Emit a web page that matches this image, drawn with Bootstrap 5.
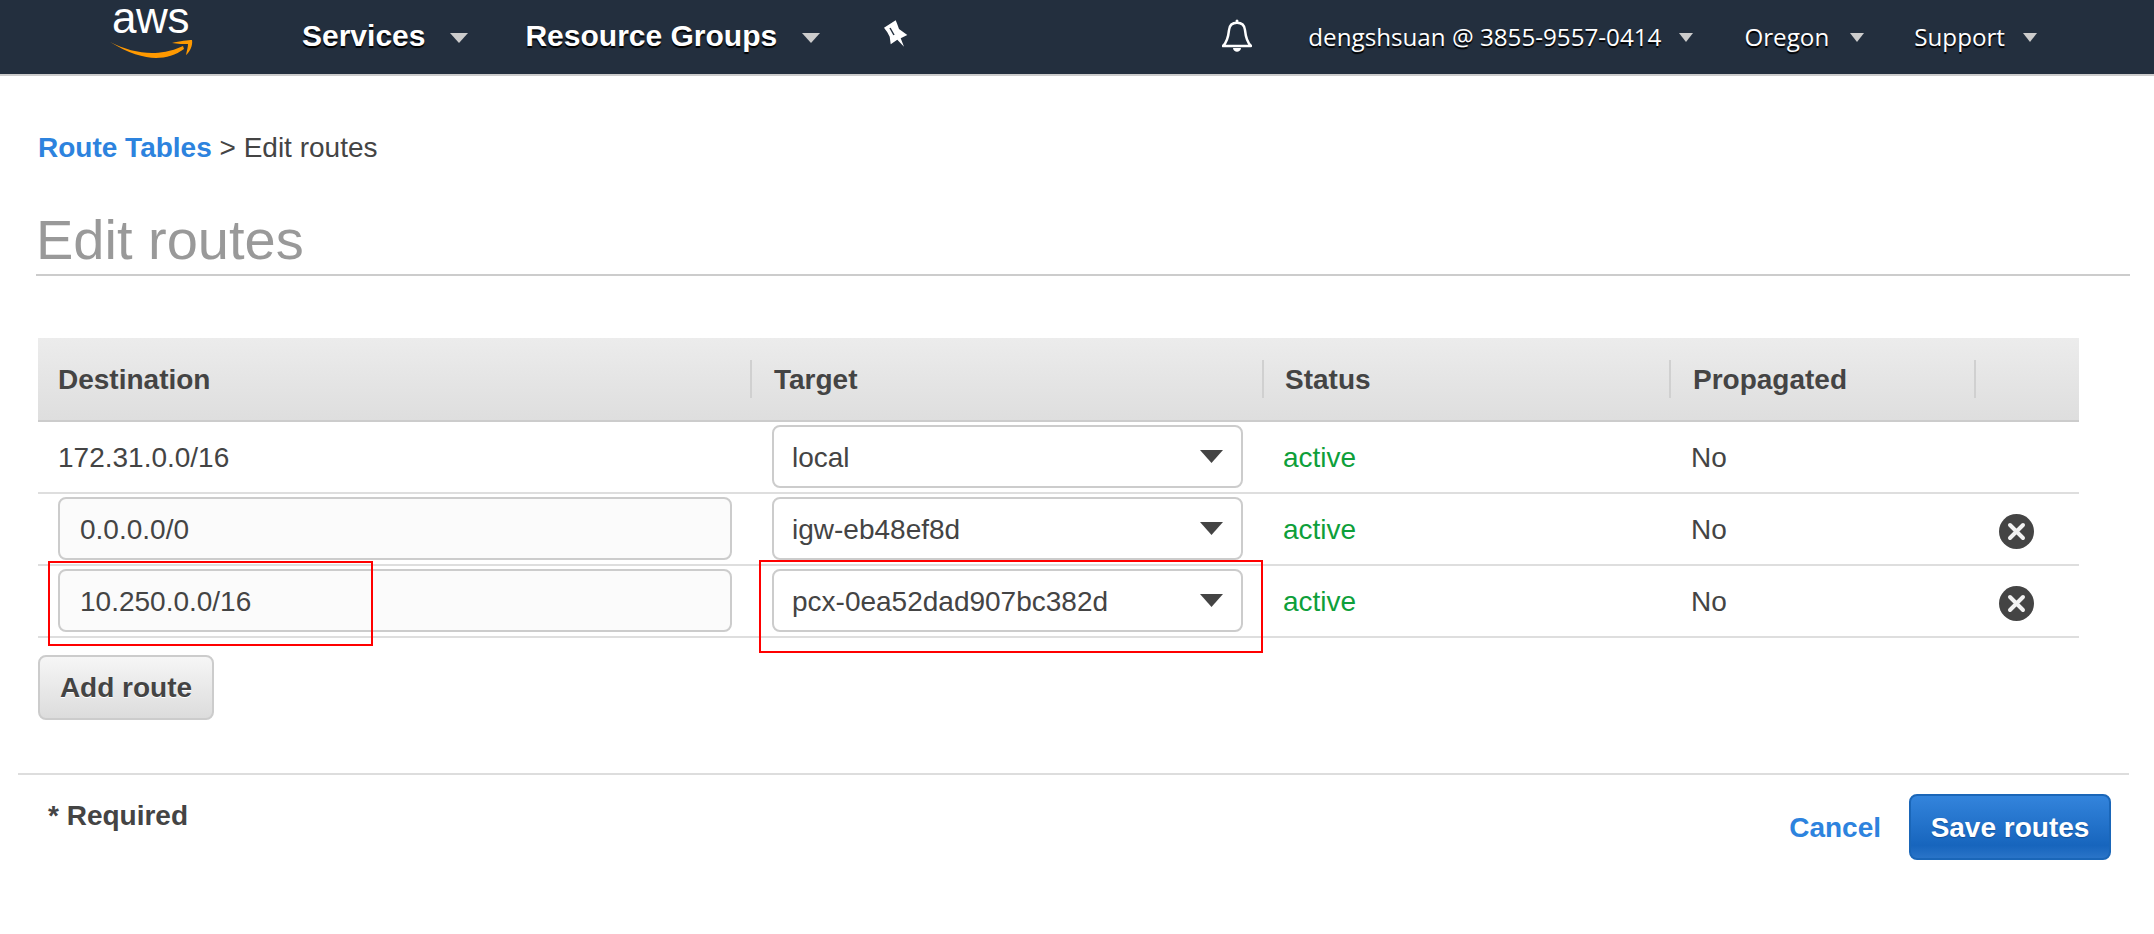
<!DOCTYPE html>
<html lang="en">
<head>
    <meta charset="UTF-8">
    <meta name="viewport" content="width=device-width, initial-scale=1.0">
    <title>Edit routes</title>
    <link rel="stylesheet" href="https://cdn.jsdelivr.net/npm/bootstrap@5.3.0/dist/css/bootstrap.min.css">

    <style>
        body { font-family: "Liberation Sans", Arial, sans-serif; font-size: 28px; color: #444; background: #fff; }

        /* Top bar */
        .aws-bar { height: 76px; background: #232f3e; border-bottom: 2px solid #ccc; padding: 0 117px 0 110px; }
        .aws-logo { width: 84px; align-self: flex-start; }
        .aws-word { display: block; padding-left: 2px; font-size: 44px; line-height: 36px; letter-spacing: -.4px; color: #fff; white-space: nowrap; }
        .aws-smile { display: block; width: 84px; height: 20px; margin-top: 4px; }
        .aws-bar .nav-link { padding: 0; color: #fff; white-space: nowrap; text-shadow: 0 2px 1px #000; }
        .aws-bar .main-link { font-weight: 700; font-size: 30px; line-height: 1; margin-top: -2px; }
        .aws-bar .user-link { font-family: "Open Sans", "Noto Sans", sans-serif; font-size: 24.2px; line-height: 1; }
        .aws-bar .dropdown-toggle::after { border-top: 10px solid #ccc; border-left: 9px solid transparent; border-right: 9px solid transparent; border-bottom: 0; margin-left: 25px; vertical-align: 3px; }
        .aws-bar .user-link.dropdown-toggle::after { border-top-width: 9px; border-left-width: 7px; border-right-width: 7px; margin-left: 18px; vertical-align: 4px; }
        .aws-bar .user-link.caret-wide::after { margin-left: 21px; }
        .gap-services { margin-left: 108px; }
        .gap-groups { margin-left: 57px; }
        .gap-pin { margin-left: 64px; }
        .pin-icon { display: block; width: 24px; height: 28px; margin-top: -6px; }
        .bell-icon { display: block; width: 30px; height: 34px; margin-top: -3px; }
        .gap-user { margin-left: 56px; }
        .gap-region { margin-left: 51px; }
        .gap-support { margin-left: 50px; }

        /* Page header */
        .crumbs { padding: 56px 0 0 38px; line-height: 32px; }
        .crumbs a { color: #2d83de; font-weight: 700; text-decoration: none; }
        .page-title { margin: 44px 24px 0 36px; padding: 0 0 2px 0; font-size: 56px; line-height: 64px; font-weight: 400; color: #999; border-bottom: 2px solid #ccc; }

        /* Routes table */
        .routes-wrap { margin: 62px 75px 0 38px; }
        .routes-table { table-layout: fixed; width: 2041px; margin: 0; border-collapse: separate; border-spacing: 0; color: #444; }
        .routes-table > :not(caption) > * > * { padding: 0; background: transparent; box-shadow: none; color: #444; }
        .routes-table thead th { height: 84px; vertical-align: middle; background: linear-gradient(#ececec, #dedede); border-bottom: 2px solid #ccc; font-weight: 700; position: relative; padding: 2px 0 0 20px; }
        .routes-table thead th.col-target, .routes-table thead th.col-prop { padding-left: 22px; }
        .routes-table thead th.col-status { padding-left: 21px; }
        .routes-table thead th:not(:last-child)::after { content: ""; position: absolute; right: -1px; top: 22px; height: 38px; width: 3px; background: #d0d0d0; border-right: 1px solid #fff; }
        .routes-table tbody td { height: 72px; padding: 3px 0 4px 0; vertical-align: top; line-height: 63px; border-bottom: 2px solid #dedede; position: relative; }
        .routes-table .col-dest { width: 714px; }
        .routes-table .col-target { width: 512px; }
        .routes-table .col-status { width: 407px; }
        .routes-table .col-prop { width: 305px; }
        .routes-table tbody td.cell-status { padding: 4px 0 3px 19px; color: #0e9f3a; }
        .routes-table tbody td.cell-dest { padding-left: 20px; padding-right: 20px; }
        .routes-table tbody td.cell-plain { padding-top: 4px; padding-bottom: 3px; }
        .routes-table tbody td.cell-target { padding-left: 20px; padding-right: 21px; }
        .routes-table tbody td.cell-prop { padding: 4px 0 3px 20px; }

        .route-input, .route-select { display: block; height: 63px; font-size: 28px; line-height: 1.2; color: #444; border: 2px solid #ccc; border-radius: 8px; box-shadow: none; }
        .route-input { background: #fbfbfb; padding: 2px 20px 0; }
        .route-select { padding: 2px 60px 0 18px; background-color: #fff; background-size: 23px 13px; background-position: right 18px center;
            background-image: url("data:image/svg+xml,%3Csvg xmlns='http://www.w3.org/2000/svg' viewBox='0 0 23 13'%3E%3Cpath fill='%23444' d='M0 0h23L11.5 13z'/%3E%3C/svg%3E"); }
        .remove-icon { display: block; width: 35px; height: 35px; margin: 17px 0 0 23px; }

        /* Red annotations over the screenshot */
        .mark-box { position: absolute; border: 2px solid #f00; pointer-events: none; }
        .mark-dest { left: 10px; top: -5px; width: 325px; height: 85px; }
        .mark-target { left: 7px; top: -6px; width: 504px; height: 93px; }

        .add-btn { display: block; margin-top: 17px; width: 176px; height: 65px; padding: 0; font-size: 28px; font-weight: 700; color: #444; background: linear-gradient(#f6f6f6, #dcdcdc); border: 2px solid #ccc; border-radius: 8px; text-shadow: 0 1px 0 #fff; }

        /* Footer */
        .form-foot { margin: 53px 25px 0 18px; border-top: 2px solid #ddd; padding: 19px 18px 0 30px; }
        .req-label { font-weight: 700; line-height: 32px; margin-top: 6px; }
        .cancel-link { color: #2d83de; font-weight: 700; text-decoration: none; margin-right: 28px; padding-top: 2px; }
        .save-btn { width: 202px; height: 66px; padding: 2px 0 0; font-size: 28px; font-weight: 700; color: #fff; background: linear-gradient(#3384dc, #1765bd 80%, #2a74c8); border: 2px solid #1a66b8; border-radius: 8px; text-shadow: 0 1px 1px #124f96; }
    </style>
</head>
<body>

    <!-- Top bar -->
    <nav class="aws-bar d-flex align-items-center">
        <div class="aws-logo flex-shrink-0">
            <span class="aws-word">aws</span>
            <svg class="aws-smile" viewBox="0 0 84 20">
                <path d="M0 2C18 13 34 18 46 18C56 18 66 15 74 9L73 6C60 12 50 13 42 13C28 13 14 9 0 2Z" fill="#f90"/>
                <path d="M62 3C70 1 78 0 82 0C83 5 80 12 76 15C77 10 78 7 78 4C73 4 68 4 62 3Z" fill="#f90"/>
            </svg>
        </div>
        <a class="nav-link main-link dropdown-toggle gap-services" href="#">Services</a>
        <a class="nav-link main-link dropdown-toggle gap-groups" href="#">Resource Groups</a>
        <svg class="pin-icon gap-pin flex-shrink-0" viewBox="0 0 24 28">
            <path d="M0 7.700L11.700 .3L13.300 4.300L15 9L23.300 15L16.700 18.300L20 26.700L13.300 19.700L6.700 24.300L5.700 16.700L3.300 12.300Z" fill="#fff"/>
            <path d="M6 8L10 15" stroke="#232f3e" stroke-width="1.500"/>
        </svg>

        <svg class="bell-icon ms-auto flex-shrink-0" viewBox="0 0 30 34" fill="none" stroke="#fff" stroke-width="2.500">
            <path d="M1 27H29C24 22 23.500 16 23 11C22.500 6 19 3.700 15 3.700C11 3.700 7.500 6 7 11C6.500 16 6 22 1 27Z" stroke-linejoin="round"/>
            <circle cx="15" cy="2" r="1.500" fill="#fff" stroke="none"/>
            <path d="M11 29C11.500 34 18.500 34 19 29Z" fill="#fff" stroke="none"/>
        </svg>
        <a class="nav-link user-link dropdown-toggle gap-user" href="#">dengshsuan @ 3855-9557-0414</a>
        <a class="nav-link user-link dropdown-toggle caret-wide gap-region" href="#">Oregon</a>
        <a class="nav-link user-link dropdown-toggle gap-support" href="#">Support</a>
    </nav>

    <div class="crumbs"><a href="#">Route Tables</a> &gt; Edit routes</div>
    <h1 class="page-title">Edit routes</h1>

    <!-- Routes -->
    <div class="routes-wrap">
        <table class="table routes-table">
            <thead>
                <tr>
                    <th class="col-dest">Destination</th>
                    <th class="col-target">Target</th>
                    <th class="col-status">Status</th>
                    <th class="col-prop">Propagated</th>
                    <th></th>
                </tr>
            </thead>
            <tbody>
                <tr>
                    <td class="cell-dest cell-plain">172.31.0.0/16</td>
                    <td class="cell-target"><select class="form-select route-select"><option>local</option></select></td>
                    <td class="cell-status">active</td>
                    <td class="cell-prop">No</td>
                    <td></td>
                </tr>
                <tr>
                    <td class="cell-dest"><input class="form-control route-input" type="text" value="0.0.0.0/0"></td>
                    <td class="cell-target"><select class="form-select route-select"><option>igw-eb48ef8d</option></select></td>
                    <td class="cell-status">active</td>
                    <td class="cell-prop">No</td>
                    <td>
                        <svg class="remove-icon" viewBox="0 0 35 35"><circle cx="17.500" cy="17.500" r="17.500" fill="#444"/><path d="M11 11L24 24M24 11L11 24" stroke="#f2f2f2" stroke-width="4" stroke-linecap="round"/></svg>
                    </td>
                </tr>
                <tr>
                    <td class="cell-dest"><input class="form-control route-input" type="text" value="10.250.0.0/16"><span class="mark-box mark-dest"></span></td>
                    <td class="cell-target"><select class="form-select route-select"><option>pcx-0ea52dad907bc382d</option></select><span class="mark-box mark-target"></span></td>
                    <td class="cell-status">active</td>
                    <td class="cell-prop">No</td>
                    <td>
                        <svg class="remove-icon" viewBox="0 0 35 35"><circle cx="17.500" cy="17.500" r="17.500" fill="#444"/><path d="M11 11L24 24M24 11L11 24" stroke="#f2f2f2" stroke-width="4" stroke-linecap="round"/></svg>
                    </td>
                </tr>
            </tbody>
        </table>
        <button type="button" class="btn add-btn">Add route</button>
    </div>

    <!-- Footer -->
    <div class="form-foot d-flex justify-content-between align-items-start">
        <div class="req-label">* Required</div>
        <div class="d-flex align-items-center">
            <a class="cancel-link" href="#">Cancel</a>
            <button type="button" class="btn save-btn">Save routes</button>
        </div>
    </div>

    <script src="https://cdn.jsdelivr.net/npm/bootstrap@5.3.0/dist/js/bootstrap.bundle.min.js"></script>
</body>
</html>
